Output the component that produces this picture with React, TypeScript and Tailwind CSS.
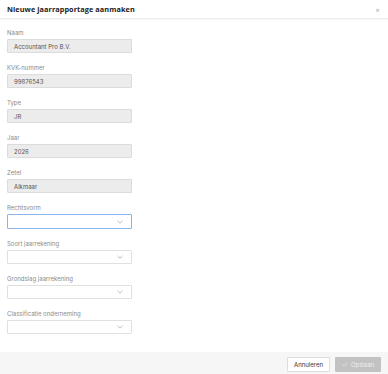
const font = { fontFamily: "Inter, 'Open Sans', sans-serif" };

const readonlyFields = [
  { label: "Naam", value: "Accountant Pro B.V." },
  { label: "KVK-nummer", value: "99876543" },
  { label: "Type", value: "JR" },
  { label: "Jaar", value: "2026" },
  { label: "Zetel", value: "Alkmaar" },
];

const selectFields = [
  { label: "Rechtsvorm", focused: true },
  { label: "Soort jaarrekening" },
  { label: "Grondslag jaarrekening" },
  { label: "Classificatie onderneming" },
];

const Chevron = () => (
  <svg width="6" height="4" viewBox="0 0 6 4" className="text-[#9aa0a6]">
    <path d="M0.5 0.8 L3 3.2 L5.5 0.8" fill="none" stroke="currentColor" strokeWidth="0.7" />
  </svg>
);

export default function App() {
  return (
    <div className="w-[388px] h-[374px] bg-white overflow-hidden flex flex-col" style={font}>
      <div className="h-[19px] shrink-0 flex items-center justify-between px-[7px] border-b border-[#ededed] shadow-[0_1px_1px_rgba(0,0,0,0.03)]">
        <span className="text-[7.3px] font-bold text-[#222] tracking-[0.01em]" style={{ fontFamily: "'Open Sans', Inter, sans-serif" }}>
          Nieuwe jaarrapportage aanmaken
        </span>
        <span className="text-[7px] text-[#aaa] leading-none mr-[1px]">×</span>
      </div>

      <div className="flex-1 pt-[10px] px-[7px] flex flex-col">
        {readonlyFields.map((f) => (
          <div key={f.label} className="mb-[11px]">
            <div className="h-[7px] leading-[7px] text-[6px] text-[#8a8a8a]">{f.label}</div>
            <div className="mt-[3px] w-[125px] h-[14px] bg-[#ececec] border border-[#dcdcdc] rounded-[1px] flex items-center px-[6px]">
              <span className="text-[6px] text-[#555]">{f.value}</span>
            </div>
          </div>
        ))}
        {selectFields.map((f) => (
          <div key={f.label} className="mb-[11px]">
            <div className="h-[7px] leading-[7px] text-[6px] text-[#8a8a8a]">{f.label}</div>
            <div
              className={
                f.focused
                  ? "mt-[3px] w-[125px] h-[15px] bg-white border border-[#8ab4ec] rounded-[1px] flex items-center justify-end pr-[8px]"
                  : "mt-[3px] w-[125px] h-[14px] bg-white border border-[#e0e0e0] rounded-[1px] flex items-center justify-end pr-[8px]"
              }
            >
              <Chevron />
            </div>
          </div>
        ))}
      </div>

      <div className="h-[22px] shrink-0 bg-[#f6f6f6] flex items-start justify-end gap-[5px] pt-[5px] pr-[7px]">
        <button className="h-[15px] w-[43px] bg-white border border-[#dedede] rounded-[1px] text-[6px] text-[#333] flex items-center justify-center">
          Annuleren
        </button>
        <button className="h-[15px] w-[46px] bg-[#c2c2c2] rounded-[1px] text-[6px] text-[#eeeeee] flex items-center justify-center gap-[3px]">
          <svg width="6" height="5" viewBox="0 0 6 5">
            <path d="M0.6 2.6 L2.2 4.1 L5.4 0.8" fill="none" stroke="#eeeeee" strokeWidth="0.7" />
          </svg>
          Opslaan
        </button>
      </div>
    </div>
  );
}
